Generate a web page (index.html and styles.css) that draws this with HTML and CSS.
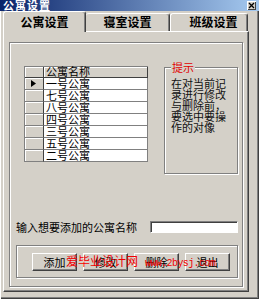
FILE: index.html
```html
<!DOCTYPE html>
<html lang="zh-CN">
<head>
<meta charset="utf-8">
<title>公寓设置</title>
<link rel="stylesheet" href="styles.css">
</head>
<body>
<div class="window">
  <div class="titlebar">
    <span class="title">公寓设置</span>
    <span class="close"><svg width="7" height="7" viewBox="0 0 7 7"><path d="M1 1L6 6M6 1L1 6" stroke="#000" stroke-width="1.3"/></svg></span>
  </div>
  <div class="tabs">
    <div class="tab active">公寓设置</div>
    <div class="tab mid">寝室设置</div>
    <div class="tab last">班级设置</div>
  </div>
  <div class="panel">
    <div class="frame">
      <div class="top">
        <div class="grid">
          <div class="grow head"><div class="rh"></div><div class="cell col">公寓名称</div></div>
          <div class="grow"><div class="rh"><svg class="cur" width="5" height="7" viewBox="0 0 5 7"><path d="M0 0L5 3.5L0 7Z" fill="#000"/></svg></div><div class="cell">一号公寓</div></div>
          <div class="grow"><div class="rh"></div><div class="cell">七号公寓</div></div>
          <div class="grow"><div class="rh"></div><div class="cell">八号公寓</div></div>
          <div class="grow"><div class="rh"></div><div class="cell">四号公寓</div></div>
          <div class="grow"><div class="rh"></div><div class="cell">三号公寓</div></div>
          <div class="grow"><div class="rh"></div><div class="cell">五号公寓</div></div>
          <div class="grow"><div class="rh"></div><div class="cell">二号公寓</div></div>
        </div>
        <div class="hint">
          <div class="hint-title">提示</div>
          <p class="hint-text">在对当前记录进行修改与删除前，要选中要操作的对像</p>
        </div>
      </div>
      <div class="inputrow">
        <span class="label">输入想要添加的公寓名称</span>
        <div class="input"></div>
      </div>
      <div class="btngroup">
        <div class="btn">添加</div>
        <div class="btn">修改</div>
        <div class="btn">删除</div>
        <div class="btn">退出</div>
      </div>
    </div>
  </div>
  <div class="watermark"><span class="wm-cn">爱毕业设计网</span><span class="wm-en">www.2bysj.com</span></div>
</div>
</body>
</html>
```

FILE: styles.css
```css
* { box-sizing: border-box; }
html, body { margin: 0; padding: 0; }
body {
  background: #d4d0c8;
  font-family: "Noto Sans CJK SC", sans-serif;
  font-size: 11px;
  color: #000;
}
.window {
  position: relative;
  width: 259px;
  height: 299px;
  background: #d4d0c8;
  box-shadow: inset 1px 1px #fff, inset -1px -1px #404040, inset -2px -2px #808080;
  overflow: hidden;
}
.titlebar {
  display: flex;
  align-items: center;
  height: 11px;
  background: linear-gradient(to right, #0a246a, #a6caf0);
}
.title {
  color: #fff;
  font-weight: bold;
  font-size: 11px;
  line-height: 11px;
  padding-left: 3px;
  letter-spacing: 1px;
}
.close {
  margin-left: auto;
  margin-right: 3px;
  width: 9px;
  height: 9px;
  background: #d4d0c8;
  box-shadow: inset 1px 1px #fff, inset -1px -1px #404040;
  display: flex;
  align-items: center;
  justify-content: center;
}
.tabs {
  display: flex;
  align-items: flex-end;
  height: 20px;
  padding-left: 3px;
}
.tab {
  height: 18px;
  font-size: 12px;
  font-weight: bold;
  line-height: 16px;
  text-align: center;
  border: 1px solid;
  border-color: #fff #404040 transparent #fff;
  border-bottom: none;
  border-radius: 3px 3px 0 0;
  box-shadow: inset -1px 0 #808080;
}
.tab.active {
  width: 83px;
  height: 21px;
  margin-bottom: -1px;
  position: relative;
  z-index: 1;
  background: #d4d0c8;
  line-height: 19px;
}
.tab.mid { width: 84px; border-left: none; }
.tab.last { width: 78px; padding-left: 9px; }
.panel {
  margin-left: 3px;
  width: 246px;
  border: 1px solid;
  border-color: #fff #404040 #404040 #fff;
  box-shadow: inset -1px -1px #808080;
  padding: 10px 5px 4px 5px;
}
.frame {
  border: 1px solid #808080;
  box-shadow: inset 1px 1px #fff, 1px 1px #fff;
  padding: 0 4px 8px 6px;
}
.top {
  display: flex;
  align-items: flex-start;
}
.grid {
  margin: 23px 0 0 8px;
  width: 124px;
  border-top: 1px solid #808080;
  border-left: 1px solid #808080;
}
.grow {
  display: flex;
  height: 12px;
}
.grow.head { height: 11px; }
.rh {
  width: 19px;
  flex: none;
  display: flex;
  align-items: center;
  background: #d4d0c8;
  box-shadow: inset 1px 1px #fff;
  border-right: 1px solid #404040;
  border-bottom: 1px solid #808080;
}
.head .rh { border-bottom-color: #404040; }
.cell {
  flex: 1;
  padding-left: 2px;
  font-size: 11px;
  line-height: 10px;
  white-space: nowrap;
  background: #fff;
  border-right: 1px solid #808080;
  border-bottom: 1px solid #808080;
}
.cell.col {
  line-height: 9px;
  background: #d4d0c8;
  box-shadow: inset 1px 1px #fff;
  border-right-color: #404040;
  border-bottom-color: #404040;
}
.cur { display: block; margin-left: 6px; }
.hint {
  margin: 24px 0 0 16px;
  width: 74px;
  height: 107px;
  border: 1px solid #808080;
  box-shadow: inset 1px 1px #fff, 1px 1px #fff;
}
.hint-title {
  display: table;
  margin: -7px 0 0 6px;
  padding: 0 1px;
  background: #d4d0c8;
  color: #e00000;
  line-height: 12px;
}
.hint-text {
  margin: 5px 0 0 0;
  padding-left: 6px;
  width: 64px;
  line-height: 11px;
  color: #111;
}
.inputrow {
  display: flex;
  align-items: center;
  justify-content: space-between;
  margin-top: 47px;
  height: 12px;
}
.label { line-height: 12px; }
.input {
  width: 88px;
  height: 12px;
  background: #fff;
  border: 1px solid;
  border-color: #808080 #fff #fff #808080;
  box-shadow: inset 1px 1px #404040;
}
.btngroup {
  display: flex;
  gap: 6px;
  margin-top: 12px;
  padding: 7px 0 6px 15px;
  border: 1px solid #808080;
  box-shadow: inset 1px 1px #fff, 1px 1px #fff;
}
.btn {
  width: 45px;
  height: 18px;
  line-height: 16px;
  text-align: center;
  border: 1px solid;
  border-color: #fff #404040 #404040 #fff;
  box-shadow: inset -1px -1px #808080;
}
.watermark {
  position: absolute;
  left: 66px;
  top: 254px;
  display: flex;
  align-items: baseline;
  gap: 7px;
  color: #f00000;
}
.wm-cn { font-size: 12px; line-height: 14px; }
.wm-en {
  font-family: "Liberation Mono", monospace;
  font-size: 10px;
  letter-spacing: -0.6px;
}
```
